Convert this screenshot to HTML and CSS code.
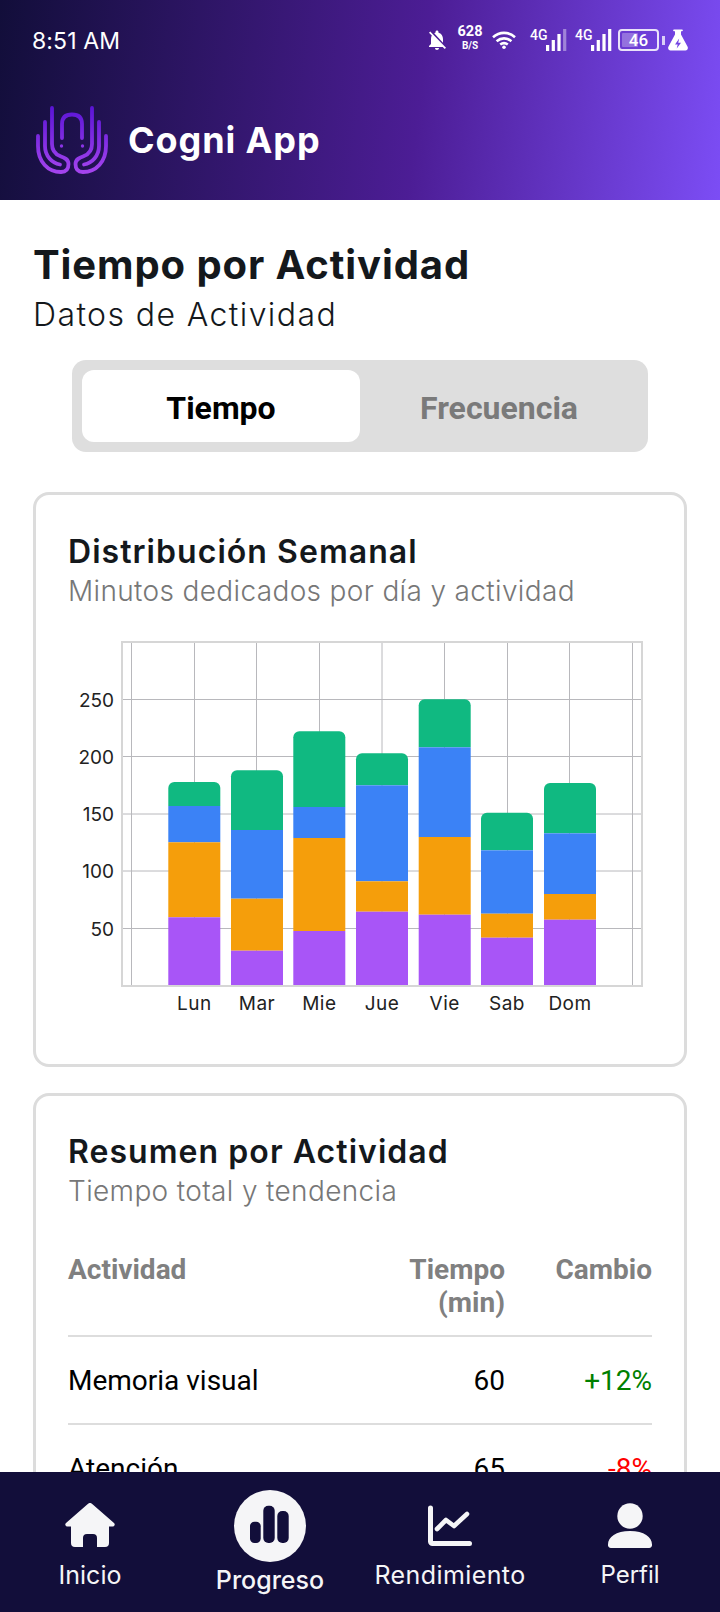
FILE: index.html
```html
<!DOCTYPE html>
<html lang="es">
<head>
<meta charset="utf-8">
<title>Cogni App</title>
<link rel="stylesheet" href="styles.css">
</head>
<body>
<div class="app">
  <header class="header">
    <div class="status">
      <span class="time">8:51 AM</span>
      <div class="status-icons">
        <svg class="i-bell" viewBox="0 0 24 24"><path fill="#fff" d="M20 18.69L7.84 6.14 5.27 3.49 4 4.76l2.8 2.8v.01c-.52.99-.8 2.16-.8 3.42v5l-2 2v1h13.730l2 2L21 19.720l-1-1.030zM12 22c1.110 0 2-.89 2-2h-4c0 1.110.89 2 2 2zm6-7.320V11c0-3.080-1.640-5.640-4.500-6.320V4c0-.83-.67-1.500-1.500-1.500s-1.500.67-1.500 1.500v.68c-.15.03-.29.08-.42.12-.1.03-.2.07-.3.11h-.01c-.2.08-.4.17-.59.27-.01 0-.01 0-.02.01L18 14.680z"/></svg>
        <span class="speed"><b>628</b><i>B/S</i></span>
        <svg class="i-wifi" viewBox="0 0 24 18"><g fill="none" stroke="#fff" stroke-width="2.600"><path d="M1 6.200C7.500.4 16.500.4 23 6.200"/><path d="M4.600 10.200c4.400-3.800 10.400-3.800 14.800 0"/><path d="M8.200 13.600c2.300-1.800 5.300-1.800 7.600 0"/></g><circle cx="12" cy="16.200" r="1.800" fill="#fff"/></svg>
        <span class="net net-first"><span class="net-label">4G</span><svg class="i-signal" viewBox="0 0 21 22"><rect x="0" y="16" width="3.200" height="6" fill="#fff"/><rect x="5.700" y="11" width="3.200" height="11" fill="#fff"/><rect x="11.400" y="5" width="3.200" height="17" fill="#fff"/><rect x="17.100" y="0" width="3.200" height="22" fill="#fff" fill-opacity=".4"/></svg></span>
        <span class="net"><span class="net-label">4G</span><svg class="i-signal" viewBox="0 0 21 22"><rect x="0" y="16" width="3.200" height="6" fill="#fff"/><rect x="5.700" y="11" width="3.200" height="11" fill="#fff"/><rect x="11.400" y="5" width="3.200" height="17" fill="#fff"/><rect x="17.100" y="0" width="3.200" height="22" fill="#fff"/></svg></span>
        <span class="battery"><span class="battery-body"><span class="battery-level"></span><span class="battery-text">46</span></span><span class="battery-tip"></span></span>
        <svg class="i-flask" viewBox="0 0 20 22"><path fill="#fff" fill-rule="evenodd" d="M6 .5h8a.8.8 0 0 1 0 1.700h-1V5.500l6.600 12.300c.8 1.600-.3 3.700-2.100 3.700H2.500C.7 21.500-.4 19.400.4 17.800L7 5.500V2.200H6A.8.8 0 0 1 6 .5zM11.200 9.500l-4.200 6h2.700l-1 4 4.300-5.800h-2.800z"/></svg>
      </div>
    </div>
    <div class="brand">
      <svg class="logo" viewBox="36 106 72 68">
        <defs>
          <linearGradient id="logo-g" gradientUnits="userSpaceOnUse" x1="72" y1="106" x2="72" y2="174">
            <stop offset="0" stop-color="#5a14d6"/>
            <stop offset="1" stop-color="#a645ee"/>
          </linearGradient>
        </defs>
        <g fill="none" stroke="url(#logo-g)" stroke-width="3.800" stroke-linecap="round">
          <path d="M62 138V124C62 117 66 114.500 72 114.500C78 114.500 82 117 82 124V138"/>
          <path d="M52 108V144C52 150 55 154 60 156C64 157.500 68.500 159 68.500 164C68.500 169 66 172 61 172C48 172 38 162 38 146V136"/>
          <path d="M45 122V146C45 156 52 163 60 164.500"/>
          <path d="M92 108V144C92 150 89 154 84 156C80 157.500 75.500 159 75.500 164C75.500 169 78 172 83 172C96 172 106 162 106 146V136"/>
          <path d="M99 122V146C99 156 92 163 84 164.500"/>
        </g>
        <circle cx="61.500" cy="146" r="1.700" fill="#8a34e6"/>
        <circle cx="82.500" cy="146" r="1.700" fill="#8a34e6"/>
      </svg>
      <span class="brand-name">Cogni App</span>
    </div>
  </header>

  <main class="main">
    <h1 class="page-title">Tiempo por Actividad</h1>
    <p class="page-sub">Datos de Actividad</p>

    <div class="segment">
      <div class="seg-btn seg-active">Tiempo</div>
      <div class="seg-btn">Frecuencia</div>
    </div>

    <section class="card card-chart">
      <h2 class="card-title">Distribución Semanal</h2>
      <p class="card-sub">Minutos dedicados por día y actividad</p>
      <svg class="chart" viewBox="68 630 584 400">
        <g stroke="#b8b8bc" stroke-width="1">
          <path d="M122 699.500H642M122 756.500H642M122 814H642M122 871H642M122 928.500H642"/>
          <path d="M131.500 642V986M194.500 642V986M256.500 642V986M319.500 642V986M382 642V986M444.500 642V986M507.500 642V986M569.500 642V986M632.500 642V986"/>
        </g>
        <g>
          <path class="green" d="M168.300 806V788a6 6 0 0 1 6-6H214.300a6 6 0 0 1 6 6V806Z"/>
          <rect class="blue" x="168.300" y="806" width="52" height="36.300"/>
          <rect class="orange" x="168.300" y="842.300" width="52" height="75"/>
          <rect class="purple" x="168.300" y="917.300" width="52" height="68.400"/>

          <path class="green" d="M231 830V776.300a6 6 0 0 1 6-6H277a6 6 0 0 1 6 6V830Z"/>
          <rect class="blue" x="231" y="830" width="52" height="68.700"/>
          <rect class="orange" x="231" y="898.700" width="52" height="52"/>
          <rect class="purple" x="231" y="950.700" width="52" height="35"/>

          <path class="green" d="M293.300 807V737.300a6 6 0 0 1 6-6H339.300a6 6 0 0 1 6 6V807Z"/>
          <rect class="blue" x="293.300" y="807" width="52" height="31"/>
          <rect class="orange" x="293.300" y="838" width="52" height="93"/>
          <rect class="purple" x="293.300" y="931" width="52" height="54.700"/>

          <path class="green" d="M356 785.300V759.300a6 6 0 0 1 6-6H402a6 6 0 0 1 6 6V785.300Z"/>
          <rect class="blue" x="356" y="785.300" width="52" height="96"/>
          <rect class="orange" x="356" y="881.300" width="52" height="30.400"/>
          <rect class="purple" x="356" y="911.700" width="52" height="74"/>

          <path class="green" d="M418.700 747.300V705.300a6 6 0 0 1 6-6H464.700a6 6 0 0 1 6 6V747.300Z"/>
          <rect class="blue" x="418.700" y="747.300" width="52" height="89.700"/>
          <rect class="orange" x="418.700" y="837" width="52" height="77.700"/>
          <rect class="purple" x="418.700" y="914.700" width="52" height="71"/>

          <path class="green" d="M481 850.300V818.700a6 6 0 0 1 6-6H527a6 6 0 0 1 6 6V850.300Z"/>
          <rect class="blue" x="481" y="850.300" width="52" height="63.400"/>
          <rect class="orange" x="481" y="913.700" width="52" height="24"/>
          <rect class="purple" x="481" y="937.700" width="52" height="48"/>

          <path class="green" d="M544 833.300V789a6 6 0 0 1 6-6H590a6 6 0 0 1 6 6V833.300Z"/>
          <rect class="blue" x="544" y="833.300" width="52" height="60.700"/>
          <rect class="orange" x="544" y="894" width="52" height="25.700"/>
          <rect class="purple" x="544" y="919.700" width="52" height="66"/>
        </g>
        <rect class="frame" x="122" y="642" width="520" height="344"/>
        <g class="y-labels">
          <text x="114" y="706.500">250</text>
          <text x="114" y="763.500">200</text>
          <text x="114" y="821">150</text>
          <text x="114" y="878">100</text>
          <text x="114" y="935.500">50</text>
        </g>
        <g class="x-labels">
          <text x="194.300" y="1010">Lun</text>
          <text x="257" y="1010">Mar</text>
          <text x="319.300" y="1010">Mie</text>
          <text x="382" y="1010">Jue</text>
          <text x="444.700" y="1010">Vie</text>
          <text x="507" y="1010">Sab</text>
          <text x="570" y="1010">Dom</text>
        </g>
      </svg>
    </section>

    <section class="card card-table">
      <h2 class="card-title">Resumen por Actividad</h2>
      <p class="card-sub">Tiempo total y tendencia</p>
      <table class="table">
        <thead>
          <tr><th class="col-a">Actividad</th><th class="col-b">Tiempo (min)</th><th class="col-c">Cambio</th></tr>
        </thead>
        <tbody>
          <tr><td>Memoria visual</td><td class="num">60</td><td class="num up">+12%</td></tr>
          <tr><td>Atención</td><td class="num">65</td><td class="num down">-8%</td></tr>
        </tbody>
      </table>
    </section>
  </main>

  <nav class="nav">
    <div class="nav-item">
      <svg class="nav-icon" width="50" height="45" viewBox="0 0 50 45"><path fill="#f5f5f7" d="M22.500 1.200a3.500 3.500 0 0 1 5 0L49 20a2 2 0 0 1-1.500 3.500H44V40a4 4 0 0 1-4 4H32V35a4 4 0 0 0-4-4H22a4 4 0 0 0-4 4V44H10a4 4 0 0 1-4-4V23.500H2.500A2 2 0 0 1 1 20Z"/></svg>
      <span class="nav-label">Inicio</span>
    </div>
    <div class="nav-item nav-item-active">
      <span class="nav-circle">
        <svg width="72" height="72" viewBox="0 0 72 72"><g fill="#120e3a"><rect x="16" y="31.700" width="10.700" height="21.300" rx="4.500"/><rect x="29.300" y="15.700" width="11.400" height="37.300" rx="5"/><rect x="43.300" y="21" width="11.400" height="32" rx="5"/></g></svg>
      </span>
      <span class="nav-label nav-label-active">Progreso</span>
    </div>
    <div class="nav-item">
      <svg class="nav-icon" width="50" height="45" viewBox="0 0 50 45"><g fill="none" stroke="#f5f5f7" stroke-width="5" stroke-linecap="round" stroke-linejoin="round"><path d="M5.500 5V38.500a2 2 0 0 0 2 2H44.500"/><path d="M12 26L21 17l8 6L42 11" stroke-width="4.600"/></g></svg>
      <span class="nav-label nav-label-wide">Rendimiento</span>
    </div>
    <div class="nav-item">
      <svg class="nav-icon" width="50" height="45" viewBox="0 0 50 45"><g fill="#f5f5f7"><circle cx="25" cy="13" r="12.700"/><path d="M3 41.500C3 34 11 28 25 28S47 34 47 41.500A3 3 0 0 1 44 45H6A3 3 0 0 1 3 41.500Z"/></g></svg>
      <span class="nav-label nav-label-tight">Perfil</span>
    </div>
  </nav>
</div>
</body>
</html>
```

FILE: styles.css
```css
* { box-sizing: border-box; }
html, body { margin: 0; padding: 0; }
body { width: 720px; height: 1612px; overflow: hidden; background: #fff; font-family: "Inter", "Liberation Sans", sans-serif; }
.app { width: 720px; height: 1612px; display: flex; flex-direction: column; }

.header { height: 200px; flex: none; background: linear-gradient(97deg, #120e3a 0%, #4c1d95 58%, #7c4df5 100%); color: #fff; }
.status { height: 80px; padding: 26px 32px 0; display: flex; justify-content: space-between; align-items: flex-start; }
.time { font: 400 23px/30px "Inter", sans-serif; letter-spacing: .1px; }
.status-icons { display: flex; align-items: center; height: 28px; }
.i-bell { width: 24px; height: 24px; margin-right: 9px; }
.speed { display: flex; flex-direction: column; align-items: center; width: 24px; margin: 0 10px 5px 0; font-family: "Roboto", sans-serif; color: #fff; }
.speed b { font-size: 14.500px; line-height: 14px; font-weight: 700; }
.speed i { margin-top: 2px; font-size: 10px; line-height: 9px; font-weight: 700; font-style: normal; }
.i-wifi { width: 24px; height: 18px; margin-right: 14px; }
.net { display: flex; align-items: flex-end; margin-right: 6px; height: 22px; }
.net-first { margin-right: 8px; }
.net-label { font: 500 14px/13px "Roboto", sans-serif; align-self: flex-start; width: 16px; }
.i-signal { width: 21px; height: 22px; }
.battery { display: flex; align-items: center; margin-right: 3.500px; }
.battery-body { position: relative; width: 41px; height: 22px; border: 2px solid rgba(255,255,255,.85); border-radius: 4px; display: flex; align-items: center; justify-content: center; overflow: hidden; }
.battery-level { position: absolute; left: 2px; top: 2px; bottom: 2px; width: 42%; background: rgba(255,255,255,.28); border-radius: 1px; }
.battery-text { position: relative; font: 500 17px/18px "Roboto", sans-serif; color: #fff; }
.battery-tip { width: 2.500px; height: 9px; margin-left: 3px; background: rgba(255,255,255,.75); }
.i-flask { width: 20px; height: 22px; }

.brand { display: flex; align-items: center; padding-left: 36px; height: 68px; margin-top: 26px; }
.logo { width: 72px; height: 68px; flex: none; }
.brand-name { margin-left: 20px; font: 700 36px/40px "Inter", sans-serif; color: #fff; letter-spacing: .9px; }

.main { flex: 1; min-height: 0; overflow: hidden; padding: 0 33px; }
.page-title { margin: 40px 0 0; font: 700 40px/50px "Inter", sans-serif; color: #14181c; letter-spacing: .9px; }
.page-sub { margin: 3px 0 0; font: 300 32px/44px "Inter", sans-serif; color: #14181c; letter-spacing: 1.400px; }

.segment { width: 576px; height: 92px; margin: 23px 0 0 39px; padding: 10px; display: flex; background: #dedede; border-radius: 14px; }
.seg-btn { flex: 1; display: flex; align-items: center; justify-content: center; padding-top: 3px; font: 700 32px/36px "Roboto", sans-serif; color: #7a7a7a; border-radius: 12px; }
.seg-active { background: #fff; color: #000; }

.card { border: 3px solid #dcdcdc; border-radius: 16px; padding: 0 32px; background: #fff; }
.card-chart { height: 575px; margin-top: 40px; padding-top: 37px; }
.card-table { margin-top: 26px; padding-top: 36px; }
.card-title { margin: 0; font: 600 32px/40px "Inter", sans-serif; color: #14181c; letter-spacing: 1.050px; }
.card-sub { margin: 0; font: 300 28px/38px "Inter", sans-serif; color: #777; letter-spacing: .35px; }

.chart { display: block; width: 584px; height: 400px; margin-top: 20px; }
.green { fill: #10b981; }
.blue { fill: #3b82f6; }
.orange { fill: #f59e0b; }
.purple { fill: #a855f7; }
.frame { fill: none; stroke: #d6d6d6; stroke-width: 2; }
.y-labels text { font: 400 19px "Inter", sans-serif; fill: #222; text-anchor: end; }
.x-labels text { font: 400 19px "Inter", sans-serif; fill: #222; text-anchor: middle; letter-spacing: .5px; }

.table { width: 100%; margin-top: 43px; border-collapse: collapse; font-family: "Roboto", sans-serif; }
.table th { padding: 0 0 16px; font: 700 28px/33px "Roboto", sans-serif; color: #808080; text-align: right; vertical-align: top; border-bottom: 2px solid #ddd; }
.table th.col-a { text-align: left; }
.col-b { width: 130px; }
.col-c { width: 147px; }
.table td { padding: 27px 0 26px; font: 400 28px/33px "Roboto", sans-serif; color: #000; border-bottom: 2px solid #ddd; }
.table td.num { text-align: right; }
.table td.up { color: #008000; }
.table td.down { color: #f00; }

.nav { height: 140px; flex: none; display: grid; grid-template-columns: repeat(4, 180px); background: #120e3a; color: #f5f5f7; }
.nav-item { position: relative; display: flex; flex-direction: column; align-items: center; padding-top: 31px; }
.nav-icon { display: block; }
.nav-label { margin-top: 11px; font: 400 25px/32px "Inter", sans-serif; white-space: nowrap; }
.nav-label-wide { letter-spacing: .4px; }
.nav-label-tight { font-size: 24px; }
.nav-item-active { padding-top: 18px; }
.nav-circle { display: block; width: 72px; height: 72px; border-radius: 50%; background: #f5f5f7; }
.nav-label-active { margin-top: 2px; font-weight: 500; }
```
